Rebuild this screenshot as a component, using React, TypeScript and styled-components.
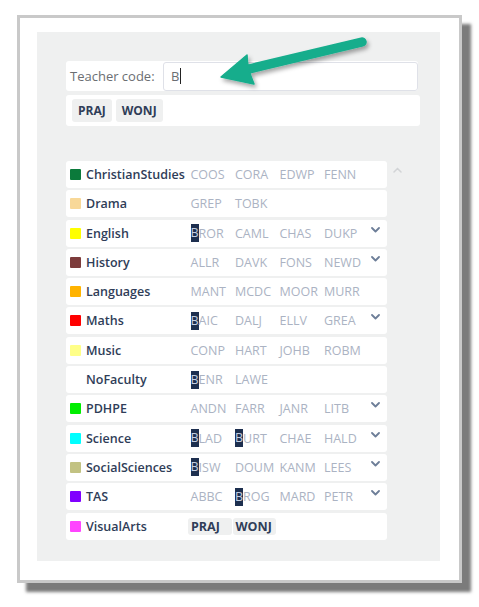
import styled, { createGlobalStyle } from 'styled-components';

const GlobalStyle = createGlobalStyle`
  html, body {
    margin: 0;
    padding: 0;
    background: #ffffff;
  }
  body {
    font-family: "Open Sans", "Noto Sans", sans-serif;
  }
`;

interface Subject {
  name: string;
  color?: string;
  codes: string[];
  more?: boolean;
  selected?: boolean;
}

const subjects: Subject[] = [
  { name: 'ChristianStudies', color: '#0b7a3b', codes: ['COOS', 'CORA', 'EDWP', 'FENN'] },
  { name: 'Drama', color: '#f8d898', codes: ['GREP', 'TOBK'] },
  { name: 'English', color: '#ffff00', codes: ['BROR', 'CAML', 'CHAS', 'DUKP'], more: true },
  { name: 'History', color: '#7d3c3c', codes: ['ALLR', 'DAVK', 'FONS', 'NEWD'], more: true },
  { name: 'Languages', color: '#ffb300', codes: ['MANT', 'MCDC', 'MOOR', 'MURR'] },
  { name: 'Maths', color: '#ff0000', codes: ['BAIC', 'DALJ', 'ELLV', 'GREA'], more: true },
  { name: 'Music', color: '#ffff88', codes: ['CONP', 'HART', 'JOHB', 'ROBM'] },
  { name: 'NoFaculty', codes: ['BENR', 'LAWE'] },
  { name: 'PDHPE', color: '#00ee00', codes: ['ANDN', 'FARR', 'JANR', 'LITB'], more: true },
  { name: 'Science', color: '#00ffff', codes: ['BLAD', 'BURT', 'CHAE', 'HALD'], more: true },
  { name: 'SocialSciences', color: '#c2c282', codes: ['BISW', 'DOUM', 'KANM', 'LEES'], more: true },
  { name: 'TAS', color: '#8000ff', codes: ['ABBC', 'BROG', 'MARD', 'PETR'], more: true },
  { name: 'VisualArts', color: '#ff44ff', codes: ['PRAJ', 'WONJ'], selected: true },
];

const query = 'B';

function Code({ code, selected }: { code: string; selected?: boolean }) {
  if (selected) {
    return <CodeCell><SelectedTag>{code}</SelectedTag></CodeCell>;
  }
  if (code.startsWith(query)) {
    return (
      <CodeCell>
        <Hit>{code.slice(0, query.length)}</Hit>
        {code.slice(query.length)}
      </CodeCell>
    );
  }
  return <CodeCell>{code}</CodeCell>;
}

function ChevronDown() {
  return (
    <svg width="9" height="6" viewBox="0 0 9 6">
      <path d="M1 1 L4.5 4.5 L8 1" fill="none" stroke="#6d7e98" strokeWidth="1.8" strokeLinecap="round" strokeLinejoin="round" />
    </svg>
  );
}

function Arrow() {
  return (
    <ArrowSvg viewBox="205 30 170 65" width="170" height="65">
      <defs>
        <filter id="sh" x="-20%" y="-40%" width="140%" height="180%">
          <feDropShadow dx="2" dy="3" stdDeviation="2" floodColor="#000" floodOpacity="0.35" />
        </filter>
      </defs>
      <g filter="url(#sh)" fill="#14ad8c" stroke="#14ad8c">
        <line x1="362" y1="42" x2="245" y2="70" strokeWidth="9.5" strokeLinecap="round" />
        <path d="M221 77 L247 55 Q247 68 254 84 Z" strokeWidth="1.5" strokeLinejoin="round" />
      </g>
    </ArrowSvg>
  );
}

export default function App() {
  return (
    <>
      <GlobalStyle />
      <Page>
        <Frame>
          <Panel>
            <SearchRow>
              <Label>Teacher code:</Label>
              <CodeInput>B<Caret /></CodeInput>
            </SearchRow>
            <TagBox>
              <Tag>PRAJ</Tag>
              <Tag>WONJ</Tag>
            </TagBox>
            <TableArea>
              <Rows>
                {subjects.map((s) => (
                  <Row key={s.name}>
                    <NameCell>
                      <Swatch $color={s.color} />
                      <Name>{s.name}</Name>
                    </NameCell>
                    <Codes>
                      {s.codes.map((c) => (
                        <Code key={c} code={c} selected={s.selected} />
                      ))}
                    </Codes>
                    <More>{s.more && <ChevronDown />}</More>
                  </Row>
                ))}
              </Rows>
              <Scroll>
                <svg width="9" height="6" viewBox="0 0 9 6">
                  <path d="M1 5 L4.5 1.5 L8 5" fill="none" stroke="#d2d4d6" strokeWidth="1.5" strokeLinecap="round" />
                </svg>
              </Scroll>
            </TableArea>
          </Panel>
          <Arrow />
        </Frame>
      </Page>
    </>
  );
}

const Page = styled.div`
  padding: 15px 0 0 17px;
  width: 479px;
  height: 607px;
  box-sizing: border-box;
`;

const Frame = styled.div`
  position: relative;
  width: 445px;
  height: 568px;
  box-sizing: border-box;
  border: 3px solid #c9c9c9;
  background: #ffffff;
  padding: 14px 19px 19px 17px;
  box-shadow: 9px 9px 3px #7b7b7b;
`;

const ArrowSvg = styled.svg`
  position: absolute;
  left: ${205 - 20}px;
  top: ${30 - 18}px;
  pointer-events: none;
  overflow: visible;
`;

const Panel = styled.div`
  height: 100%;
  box-sizing: border-box;
  background: #eff0f0;
  padding: 29px 20px 0 29px;
`;

const SearchRow = styled.div`
  display: flex;
  align-items: center;
  height: 30px;
  width: 352px;
  background: #ffffff;
  border-radius: 3px;
`;

const Label = styled.span`
  width: 97px;
  padding-left: 4px;
  box-sizing: border-box;
  font-size: 13px;
  color: #6b6e72;
  white-space: nowrap;
`;

const CodeInput = styled.div`
  flex: 1;
  height: 29px;
  box-sizing: border-box;
  border: 1px solid #dfe1e8;
  border-radius: 3px;
  display: flex;
  align-items: center;
  padding-left: 7px;
  font-size: 13px;
  color: #6b6e72;
`;

const Caret = styled.span`
  display: inline-block;
  width: 1px;
  height: 16px;
  background: #222;
  margin-left: 1px;
`;

const TagBox = styled.div`
  margin-top: 4px;
  width: 354px;
  height: 31px;
  box-sizing: border-box;
  background: #ffffff;
  border-radius: 3px;
  display: flex;
  align-items: center;
  gap: 4px;
  padding-left: 6px;
`;

const Tag = styled.span`
  display: flex;
  align-items: center;
  height: 23px;
  padding: 0 6px;
  background: #eff0f0;
  border-radius: 3px;
  font-size: 12px;
  font-weight: 700;
  color: #2f3d58;
`;

const TableArea = styled.div`
  margin-top: 35px;
  display: flex;
`;

const Rows = styled.div`
  width: 321px;
  display: flex;
  flex-direction: column;
  gap: 2.3px;
`;

const Row = styled.div`
  height: 27px;
  background: #ffffff;
  border-radius: 3px;
  display: flex;
  align-items: center;
`;

const NameCell = styled.div`
  width: 122px;
  display: flex;
  align-items: center;
  gap: 5px;
  padding-left: 4px;
  box-sizing: border-box;
`;

const Swatch = styled.span<{ $color?: string }>`
  width: 11px;
  height: 11px;
  border-radius: 1px;
  flex: none;
  background: ${({ $color }) => $color ?? 'transparent'};
`;

const Name = styled.span`
  font-size: 12.5px;
  font-weight: 600;
  color: #2f3d58;
  white-space: nowrap;
`;

const Codes = styled.div`
  display: flex;
  width: 178px;
`;

const CodeCell = styled.span`
  width: 44.5px;
  flex: none;
  box-sizing: border-box;
  padding-left: 2.5px;
  font-size: 12.5px;
  color: #abb3c3;
  white-space: nowrap;
  display: flex;
  align-items: center;
`;

const Hit = styled.span`
  background: #1d2f4f;
  color: #c5d0e2;
  line-height: 18px;
`;

const SelectedTag = styled.span`
  margin-left: -2.5px;
  width: 43.5px;
  height: 17px;
  box-sizing: border-box;
  padding-left: 3px;
  display: flex;
  align-items: center;
  background: #eff0f0;
  border-radius: 3px;
  font-weight: 700;
  color: #2f3d58;
`;

const More = styled.div`
  flex: 1;
  align-self: flex-start;
  padding-top: 7px;
  display: flex;
  justify-content: flex-end;
  padding-right: 7px;
`;

const Scroll = styled.div`
  width: 20px;
  display: flex;
  justify-content: center;
  padding-top: 6px;
  height: 10px;
`;
